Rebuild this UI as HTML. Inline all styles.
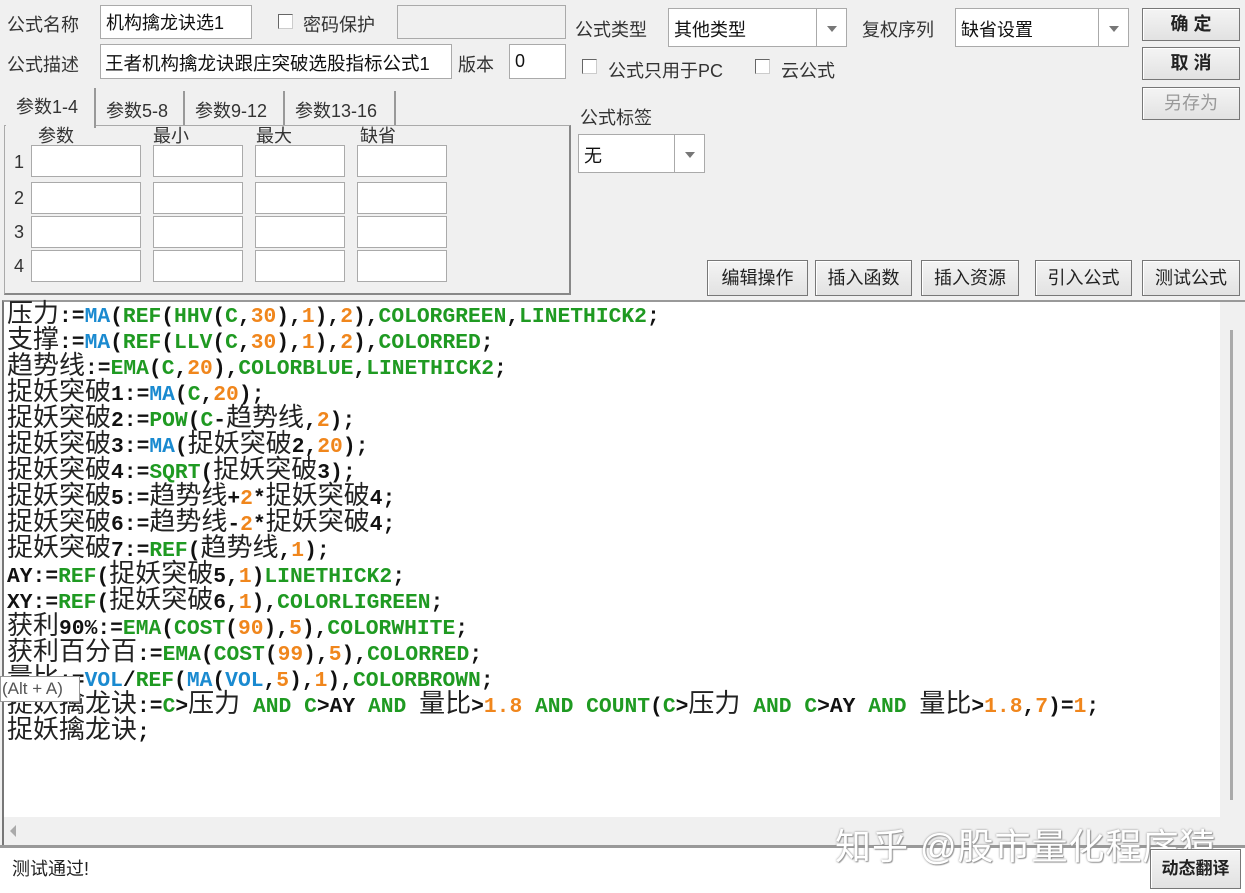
<!DOCTYPE html>
<html><head><meta charset="utf-8">
<style>
*{box-sizing:border-box;margin:0;padding:0}
body{width:1245px;height:893px;background:#f0f0f0;position:relative;overflow:hidden;font-family:"Liberation Sans","Noto Sans CJK SC",sans-serif;font-size:17px;color:#222}
.a{position:absolute}
.lbl{position:absolute;font-size:18px;color:#333;white-space:nowrap}
.inp{position:absolute;background:#fff;border:1px solid #aaa;font-size:18px;padding:3px 5px;white-space:nowrap;overflow:hidden;color:#111}
.btn{position:absolute;background:linear-gradient(#f4f4f4,#e2e2e2);border:1px solid #777;box-shadow:inset 1px 1px #fff;font-size:18px;text-align:center;color:#222;white-space:nowrap}
.cb{position:absolute;width:15px;height:15px;border:1px solid #666;border-right-color:#ccc;border-bottom-color:#ccc;background:#fff}
.dd{position:absolute;right:0;top:0;bottom:0;width:30px;border-left:1px solid #aaa}
.dd:after{content:"";position:absolute;left:10px;top:50%;margin-top:-2px;border:5px solid transparent;border-top:6px solid #777}
.code{position:absolute;left:7px;top:304px;font-family:"Liberation Mono",monospace;font-weight:bold;font-size:21.3px;line-height:26px;white-space:pre;color:#111}
.c{font-family:"Noto Sans CJK SC",sans-serif;font-weight:normal;font-size:26px;line-height:0;color:#222}
.b{color:#1a8ad0}.g{color:#1f9a22}.o{color:#f0861c}
.p{position:absolute;background:#fff;border:1px solid #aaa;height:32px}
</style></head><body>
<div class="lbl" style="left:7px;top:11px">公式名称</div>
<div class="inp" style="left:100px;top:5px;width:152px;height:34px">机构擒龙诀选1</div>
<div class="cb" style="left:278px;top:14px"></div>
<div class="lbl" style="left:303px;top:11px">密码保护</div>
<div class="inp" style="left:397px;top:5px;width:169px;height:34px;background:#f0f0f0"></div>
<div class="lbl" style="left:7px;top:51px">公式描述</div>
<div class="inp" style="left:100px;top:44px;width:352px;height:35px;padding:5px 4px;font-size:18.5px">王者机构擒龙诀跟庄突破选股指标公式1</div>
<div class="lbl" style="left:458px;top:51px">版本</div>
<div class="inp" style="left:509px;top:44px;width:57px;height:35px;padding-top:6px">0</div>

<div class="a" style="left:4px;top:125px;width:567px;height:170px;border:1px solid #aaa;border-right:2px solid #888;border-bottom:2px solid #888"></div>
<div class="a" style="left:6px;top:88px;width:90px;height:40px;background:#f0f0f0;border-right:2px solid #999"></div>
<div class="lbl" style="left:16px;top:93px">参数1-4</div>
<div class="a" style="left:98px;top:91px;width:87px;height:34px;border-right:2px solid #999"></div>
<div class="lbl" style="left:106px;top:97px">参数5-8</div>
<div class="a" style="left:187px;top:91px;width:98px;height:34px;border-right:2px solid #999"></div>
<div class="lbl" style="left:195px;top:97px">参数9-12</div>
<div class="a" style="left:287px;top:91px;width:109px;height:34px;border-right:2px solid #999"></div>
<div class="lbl" style="left:295px;top:97px">参数13-16</div>
<div class="lbl" style="left:38px;top:122px">参数</div>
<div class="lbl" style="left:153px;top:122px">最小</div>
<div class="lbl" style="left:256px;top:122px">最大</div>
<div class="lbl" style="left:360px;top:122px">缺省</div>
<div class="lbl" style="left:14px;top:152px">1</div><div class="lbl" style="left:14px;top:188px">2</div><div class="lbl" style="left:14px;top:222px">3</div><div class="lbl" style="left:14px;top:256px">4</div>
<div class="p" style="left:31px;top:145px;width:110px"></div><div class="p" style="left:153px;top:145px;width:90px"></div><div class="p" style="left:255px;top:145px;width:90px"></div><div class="p" style="left:357px;top:145px;width:90px"></div>
<div class="p" style="left:31px;top:182px;width:110px"></div><div class="p" style="left:153px;top:182px;width:90px"></div><div class="p" style="left:255px;top:182px;width:90px"></div><div class="p" style="left:357px;top:182px;width:90px"></div>
<div class="p" style="left:31px;top:216px;width:110px"></div><div class="p" style="left:153px;top:216px;width:90px"></div><div class="p" style="left:255px;top:216px;width:90px"></div><div class="p" style="left:357px;top:216px;width:90px"></div>
<div class="p" style="left:31px;top:250px;width:110px"></div><div class="p" style="left:153px;top:250px;width:90px"></div><div class="p" style="left:255px;top:250px;width:90px"></div><div class="p" style="left:357px;top:250px;width:90px"></div>

<div class="lbl" style="left:575px;top:16px">公式类型</div>
<div class="inp" style="left:668px;top:8px;width:179px;height:39px;padding-top:7px">其他类型<div class="dd"></div></div>
<div class="lbl" style="left:862px;top:16px">复权序列</div>
<div class="inp" style="left:955px;top:8px;width:174px;height:39px;padding-top:7px">缺省设置<div class="dd"></div></div>
<div class="cb" style="left:582px;top:59px"></div><div class="lbl" style="left:608px;top:57px">公式只用于PC</div>
<div class="cb" style="left:755px;top:59px"></div><div class="lbl" style="left:781px;top:57px">云公式</div>
<div class="lbl" style="left:580px;top:104px">公式标签</div>
<div class="inp" style="left:578px;top:134px;width:127px;height:39px;padding-top:7px">无<div class="dd"></div></div>
<div class="btn" style="left:1142px;top:8px;width:98px;height:33px;line-height:31px;font-weight:bold">确 定</div>
<div class="btn" style="left:1142px;top:47px;width:98px;height:33px;line-height:31px;font-weight:bold">取 消</div>
<div class="btn" style="left:1142px;top:87px;width:98px;height:33px;line-height:31px;color:#999">另存为</div>
<div class="btn" style="left:707px;top:260px;width:101px;height:36px;line-height:34px">编辑操作</div>
<div class="btn" style="left:815px;top:260px;width:97px;height:36px;line-height:34px">插入函数</div>
<div class="btn" style="left:921px;top:260px;width:98px;height:36px;line-height:34px">插入资源</div>
<div class="btn" style="left:1035px;top:260px;width:97px;height:36px;line-height:34px">引入公式</div>
<div class="btn" style="left:1142px;top:260px;width:98px;height:36px;line-height:34px">测试公式</div>

<div class="a" style="left:2px;top:300px;width:1243px;height:548px;background:#fff;border-top:2px solid #999;border-left:2px solid #777"></div>
<div class="a" style="left:1220px;top:302px;width:25px;height:515px;background:#f0f0f0"></div>
<div class="a" style="left:1230px;top:330px;width:3px;height:470px;background:#aaa"></div>
<div class="a" style="left:4px;top:817px;width:1241px;height:28px;background:#f0f0f0"></div>
<div class="a" style="left:10px;top:825px;border:6px solid transparent;border-right:6px solid #aaa;border-left:0"></div>
<div class="a" style="left:0;top:845px;width:1245px;height:3px;background:#999"></div>
<div class="a" style="left:0;top:848px;width:1245px;height:45px;background:#fff"></div>

<div class="code"><span class="c">压力</span>:=<span class="b">MA</span>(<span class="g">REF</span>(<span class="g">HHV</span>(<span class="g">C</span>,<span class="o">30</span>),<span class="o">1</span>),<span class="o">2</span>),<span class="g">COLORGREEN</span>,<span class="g">LINETHICK2</span>;
<span class="c">支撑</span>:=<span class="b">MA</span>(<span class="g">REF</span>(<span class="g">LLV</span>(<span class="g">C</span>,<span class="o">30</span>),<span class="o">1</span>),<span class="o">2</span>),<span class="g">COLORRED</span>;
<span class="c">趋势线</span>:=<span class="g">EMA</span>(<span class="g">C</span>,<span class="o">20</span>),<span class="g">COLORBLUE</span>,<span class="g">LINETHICK2</span>;
<span class="c">捉妖突破</span>1:=<span class="b">MA</span>(<span class="g">C</span>,<span class="o">20</span>);
<span class="c">捉妖突破</span>2:=<span class="g">POW</span>(<span class="g">C</span>-<span class="c">趋势线</span>,<span class="o">2</span>);
<span class="c">捉妖突破</span>3:=<span class="b">MA</span>(<span class="c">捉妖突破</span>2,<span class="o">20</span>);
<span class="c">捉妖突破</span>4:=<span class="g">SQRT</span>(<span class="c">捉妖突破</span>3);
<span class="c">捉妖突破</span>5:=<span class="c">趋势线</span>+<span class="o">2</span>*<span class="c">捉妖突破</span>4;
<span class="c">捉妖突破</span>6:=<span class="c">趋势线</span>-<span class="o">2</span>*<span class="c">捉妖突破</span>4;
<span class="c">捉妖突破</span>7:=<span class="g">REF</span>(<span class="c">趋势线</span>,<span class="o">1</span>);
AY:=<span class="g">REF</span>(<span class="c">捉妖突破</span>5,<span class="o">1</span>)<span class="g">LINETHICK2</span>;
XY:=<span class="g">REF</span>(<span class="c">捉妖突破</span>6,<span class="o">1</span>),<span class="g">COLORLIGREEN</span>;
<span class="c">获利</span>90%:=<span class="g">EMA</span>(<span class="g">COST</span>(<span class="o">90</span>),<span class="o">5</span>),<span class="g">COLORWHITE</span>;
<span class="c">获利百分百</span>:=<span class="g">EMA</span>(<span class="g">COST</span>(<span class="o">99</span>),<span class="o">5</span>),<span class="g">COLORRED</span>;
<span class="c">量比</span>:=<span class="b">VOL</span>/<span class="g">REF</span>(<span class="b">MA</span>(<span class="b">VOL</span>,<span class="o">5</span>),<span class="o">1</span>),<span class="g">COLORBROWN</span>;
<span class="c">捉妖擒龙诀</span>:=<span class="g">C</span>&gt;<span class="c">压力</span> <span class="g">AND</span> <span class="g">C</span>&gt;AY <span class="g">AND</span> <span class="c">量比</span>&gt;<span class="o">1.8</span> <span class="g">AND</span> <span class="g">COUNT</span>(<span class="g">C</span>&gt;<span class="c">压力</span> <span class="g">AND</span> <span class="g">C</span>&gt;AY <span class="g">AND</span> <span class="c">量比</span>&gt;<span class="o">1.8</span>,<span class="o">7</span>)=<span class="o">1</span>;
<span class="c">捉妖擒龙诀</span>;</div>
<div class="a" style="left:0;top:676px;width:80px;height:26px;background:#fff;border:1px solid #999;font-size:17px;line-height:24px;color:#555;padding-left:1px">(Alt + A)</div>

<div class="a" style="left:12px;top:855px;font-size:18px;color:#222">测试通过!</div>
<div class="a" style="left:835px;top:818px;font-size:36px;color:#fff;text-shadow:0 0 2px #888,1px 1px 1px #999;white-space:nowrap;letter-spacing:1px">知乎 @股市量化程序猿</div>
<div class="btn" style="left:1150px;top:849px;width:91px;height:40px;line-height:38px;font-weight:bold;font-size:17px">动态翻译</div>
</body></html>
